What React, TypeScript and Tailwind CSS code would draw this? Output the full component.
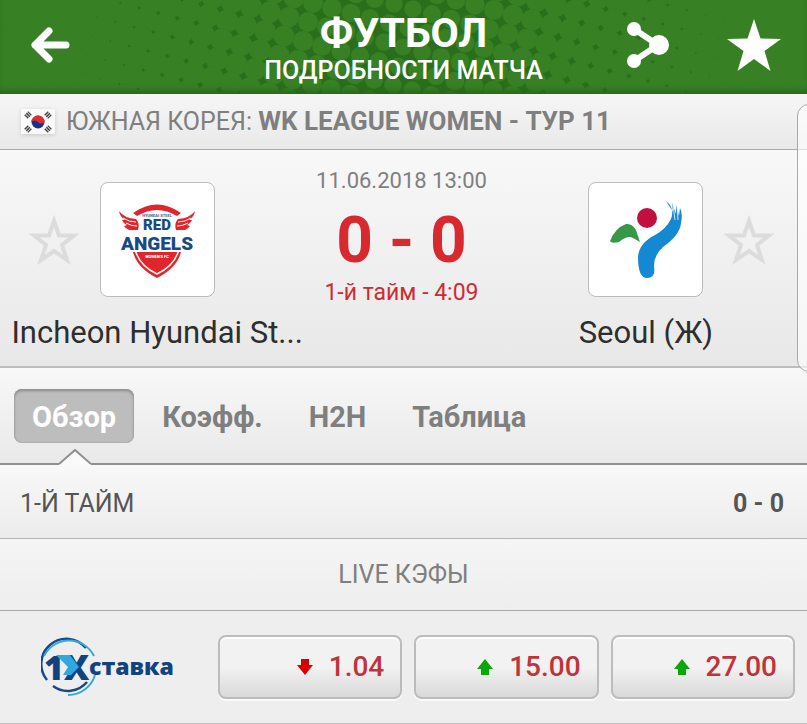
import { clsx } from "clsx";

const tabs = ["Обзор", "Коэфф.", "H2H", "Таблица"];

const odds = [
  { value: "1.04", up: false },
  { value: "15.00", up: true },
  { value: "27.00", up: true },
];

// Halftone lattice: light cells are apart in the middle and melt together at the edges
const cells: { x: number; y: number; r: number }[] = [];
for (let i = -30; i < 30; i++) {
  for (let j = -15; j < 15; j++) {
    const x = 403 + i * 19 - j * 5;
    const y = 47 + i * 5 + j * 19;
    if (y < -16 || y > 110 || x < -20 || x > 830) continue;
    cells.push({ x, y, r: Math.min(15, 8.5 + Math.abs(x - 403) / 62) });
  }
}

function Halftone() {
  return (
    <svg
      className="absolute inset-0 h-full w-full"
      viewBox="0 0 807 94"
      preserveAspectRatio="xMidYMid slice"
      aria-hidden="true"
    >
      <rect x="80" width="650" height="94" fill="#296f1b" />
      {cells.map((cell) => (
        <circle key={`${cell.x}-${cell.y}`} cx={cell.x} cy={cell.y} r={cell.r} fill="#378024" />
      ))}
    </svg>
  );
}

function BackIcon() {
  return (
    <svg width="44" height="38" viewBox="-4 0 44 38" fill="none" stroke="#fff" strokeWidth="7">
      <path d="M19 5 L5 19 L19 33 M5 19 H36" strokeLinecap="round" strokeLinejoin="round" />
    </svg>
  );
}

function ShareIcon() {
  return (
    <svg width="42" height="48" viewBox="0 0 42 48" fill="#fff">
      <path d="M7 8 L31 24 L7 40" fill="none" stroke="#fff" strokeWidth="6" />
      <circle cx="7" cy="8" r="7" />
      <circle cx="7" cy="40" r="7" />
      <circle cx="32" cy="24" r="10" />
    </svg>
  );
}

function StarIcon() {
  return (
    <svg width="54" height="52" viewBox="0 0 54 52" fill="#fff">
      <path d="M27 0 L33.5 19.5 L54 20 L37.5 32 L43.5 52 L27 40 L10.5 52 L16.5 32 L0 20 L20.5 19.5Z" />
    </svg>
  );
}

function StarOutline() {
  return (
    <svg width="52" height="50" viewBox="0 0 52 50" fill="none" stroke="#dcdcdc" strokeWidth="4">
      <path d="M26 6 L31 20.5 L46 20.5 L34 30 L39 45 L26 36 L13 45 L18 30 L6 20.5 L21 20.5Z" />
    </svg>
  );
}

function RedAngelsLogo() {
  return (
    <svg width="76" height="76" viewBox="0 0 76 76" role="img" aria-label="Red Angels">
      <path d="M14 11 Q38 -6 62 11 L58 14 Q38 2 18 14Z" fill="#e0252c" />
      <path d="M14 50 L62 50 Q58 66 38 76 Q18 66 14 50Z" fill="#e0252c" />
      <path d="M16.500 49 Q21 64 38 72 Q55 64 59.500 49" fill="none" stroke="#fff" strokeWidth="1.500" />
      <path d="M0 9 Q5 16 17 17 Q21 21 19 28 L10 28 Q6 26 5 24 L8 23 Q4 21 3 18 L6 18 Q1 15 0 9Z" fill="#e0252c" />
      <path d="M76 9 Q71 16 59 17 Q55 21 57 28 L66 28 Q70 26 71 24 L68 23 Q72 21 73 18 L70 18 Q75 15 76 9Z" fill="#e0252c" />
      <path d="M4 16 Q10 20 17 20 M7 21 Q12 24 18 24 M72 16 Q66 20 59 20 M69 21 Q64 24 58 24" fill="none" stroke="#fff" />
      <g textAnchor="middle" fontFamily="Roboto, sans-serif" fontWeight="900">
        <text x="38" y="15" fontSize="4" fill="#5873a0">HYUNDAI STEEL</text>
        <text x="38" y="28" fontSize="15" fill="#174a86">RED</text>
        <text x="38" y="48" fontSize="19" fill="#174a86">ANGELS</text>
        <text x="38" y="56" fontSize="4" fill="#fff">WOMEN'S FC</text>
      </g>
    </svg>
  );
}

function SeoulLogo() {
  return (
    <svg width="76" height="80" viewBox="0 0 76 80" role="img" aria-label="Seoul">
      <circle cx="39" cy="18" r="10" fill="#c1103f" />
      <path d="M2 41 Q7 28 18 24 Q24 23 28 30 L32 42 L25 38 Q20 35 11 42 Q3 44 2 41Z" fill="#38984a" />
      <path
        d="M58 1 Q67 8 63 19 Q58 29 47 35 Q31 43 30 57 Q30 78 39 78 Q48 78 46 66 Q46 55 55 47 Q72 35 73 23 Q75 13 72 8 L71 16 L68 5 L68 14 L64 3 L65 12Z"
        fill="#1488d2"
      />
      <path d="M65 5 L67 20 M69 7 L70 20" stroke="#fff" strokeWidth="0.800" />
    </svg>
  );
}

function BookmakerLogo() {
  return (
    <svg width="132" height="60" viewBox="0 0 132 60" role="img" aria-label="1xСтавка">
      <g fill="none">
        <path d="M6 43 A25 25 0 0 1 45 11" stroke="#164b86" strokeWidth="2.500" />
        <path d="M3 19 A28 28 0 0 1 53 19" stroke="#35a9dc" strokeWidth="2" />
        <path d="M12 49 A25 25 0 0 0 46 45" stroke="#164b86" strokeWidth="2.500" />
        <path d="M27 58 A28 28 0 0 0 54 38" stroke="#35a9dc" strokeWidth="2" />
      </g>
      <g fontFamily="'Open Sans', sans-serif" fontWeight="800" fill="#124381">
        <text x="3" y="43" fontSize="34">1</text>
        <text x="23" y="43" fontSize="35">X</text>
        <text x="48" y="38" fontSize="23">ставка</text>
      </g>
      <path d="M15 18 H29 L38 30 L30 38 L22 38 L27 30Z" fill="#2fa7df" />
    </svg>
  );
}

function OddsArrow({ up }: { up: boolean }) {
  return (
    <svg
      width="16"
      height="18"
      viewBox="0 0 16 18"
      fill={up ? "#0aa60a" : "#d50000"}
      className={up ? "" : "rotate-180"}
      aria-hidden="true"
    >
      <path d="M8 1 L16 11 H12 V17 H4 V11 H0Z" />
    </svg>
  );
}

function TeamLogo({ children }: { children: React.ReactNode }) {
  return (
    <div className="flex h-[115px] w-[115px] shrink-0 items-center justify-center rounded-lg border border-[#bcbcbc] bg-white">
      {children}
    </div>
  );
}

export default function App() {
  return (
    <div className="relative w-full overflow-hidden bg-[#eeeeee] font-['Roboto',sans-serif] text-[#7f7f7f]">
      {/* Header */}
      <header className="relative h-[94px] bg-[#378024] text-white">
        <Halftone />
        <div className="relative grid h-full grid-cols-[1fr_auto_1fr] items-center px-[26px] pb-1 shadow-[inset_0_-6px_6px_-3px_#2a651c]">
          <button type="button" aria-label="Назад" className="justify-self-start">
            <BackIcon />
          </button>
          <div className="pt-2.5 text-center">
            <h1 className="text-[41px] font-bold leading-[42px]">ФУТБОЛ</h1>
            <p className="text-[25px] font-medium leading-[34px]">ПОДРОБНОСТИ МАТЧА</p>
          </div>
          <div className="flex items-center gap-[58px] justify-self-end">
            <button type="button" aria-label="Поделиться">
              <ShareIcon />
            </button>
            <button type="button" aria-label="В избранное">
              <StarIcon />
            </button>
          </div>
        </div>
      </header>

      {/* League */}
      <div className="flex h-14 items-center gap-2.5 border-b border-[#aaaaaa] bg-linear-to-b from-[#f6f6f6] to-[#e9e9e9] px-5">
        <svg width="36" height="28" viewBox="0 0 36 28" className="shrink-0 drop-shadow-sm" role="img" aria-label="Южная Корея">
          <rect x="1" y="1" width="34" height="25" fill="#fafafa" />
          <circle cx="18" cy="14" r="6.500" fill="#17318f" />
          <path d="M11.500 14 A6.500 6.500 0 0 1 24.500 14 Q21 17 18 14 Q14 11 11.500 14Z" fill="#e02b2f" />
          <g stroke="#444" strokeWidth="5" strokeDasharray="1.500 0.700">
            <path d="M6 9 L10 5" />
            <path d="M26 5 L30 9" />
            <path d="M6 19 L10 23" />
            <path d="M26 23 L30 19" />
          </g>
        </svg>
        <p className="whitespace-nowrap text-[25px] leading-8">
          ЮЖНАЯ КОРЕЯ: <strong className="text-[26px] font-bold">WK LEAGUE WOMEN - ТУР 11</strong>
        </p>
      </div>

      {/* Match */}
      <section className="grid h-[218px] grid-cols-[9fr_5fr_9fr] border-b-2 border-[#bdbdbd] bg-linear-to-b from-[#f8f8f8] to-[#e8e8e8] pr-1">
        <div className="flex flex-col items-center gap-4 pt-8">
          <div className="flex items-center gap-5">
            <button type="button" aria-label="Incheon Hyundai Steel в избранное">
              <StarOutline />
            </button>
            <TeamLogo>
              <RedAngelsLogo />
            </TeamLogo>
            <div className="w-[52px]" />
          </div>
          <h2 className="whitespace-nowrap text-[31px] leading-10 text-[#2e2e2e]">Incheon Hyundai St...</h2>
        </div>
        <div className="flex flex-col items-center whitespace-nowrap pt-[17px]">
          <time className="text-[22px] leading-7">11.06.2018 13:00</time>
          <p className="mt-2 text-[64px] font-bold leading-[76px] text-[#d8292f]">0 - 0</p>
          <p className="text-[23px] leading-7 text-[#cc2d33]">1-й тайм - 4:09</p>
        </div>
        <div className="flex flex-col items-center gap-4 pt-8">
          <div className="flex items-center gap-5">
            <div className="w-[52px]" />
            <TeamLogo>
              <SeoulLogo />
            </TeamLogo>
            <button type="button" aria-label="Seoul в избранное">
              <StarOutline />
            </button>
          </div>
          <h2 className="whitespace-nowrap text-[31px] leading-10 text-[#2e2e2e]">Seoul (Ж)</h2>
        </div>
      </section>

      {/* Tabs */}
      <nav className="relative flex h-[97px] items-start gap-2.5 border-b-2 border-[#8f8f8f] bg-linear-to-b from-[#f8f8f8] to-[#e9e9e9] px-3.5 pt-[21px]">
        {tabs.map((tab, index) => (
          <button
            key={tab}
            type="button"
            className={clsx(
              "h-[54px] rounded-lg px-[18px] pt-1 text-[29px] font-bold",
              index === 0 &&
                "bg-[#bdbdbd] text-white shadow-[inset_0_2px_3px_#8c8c8c,inset_0_0_2px_#999999]",
            )}
          >
            {tab}
          </button>
        ))}
        <svg width="32" height="18" viewBox="0 0 32 18" className="absolute -bottom-1 left-[59px]" aria-hidden="true">
          <path d="M0 15 L16 1 L32 15 V18 H0Z" fill="#fafafa" />
          <path d="M0 15 L16 1 L32 15" fill="none" stroke="#8f8f8f" strokeWidth="2" />
        </svg>
      </nav>

      {/* First half */}
      <div className="flex h-[74px] items-center justify-between border-b border-[#b5b5b5] bg-linear-to-b from-[#f8f8f8] to-[#ececec] pl-5 pr-[23px] pt-1 text-[25px] text-[#555555]">
        <h3>1-Й ТАЙМ</h3>
        <strong className="font-bold">0 - 0</strong>
      </div>

      <div className="flex h-[72px] items-center justify-center border-b border-[#a8a8a8] bg-linear-to-b from-[#f5f5f5] to-[#eeeeee] text-[25px]">
        <h3>LIVE КЭФЫ</h3>
      </div>

      {/* Odds */}
      <div className="flex h-[113px] items-center border-b border-[#bdbdbd]">
        <div className="w-[27%] pl-[41px]">
          <BookmakerLogo />
        </div>
        <div className="grid flex-1 grid-cols-3 gap-3 pr-3">
          {odds.map((odd) => (
            <button
              key={odd.value}
              type="button"
              className="flex h-16 items-center justify-end gap-4 rounded-lg border-2 border-[#bcbcbc] bg-linear-to-b from-[#f2f2f2] from-50% to-[#d9d9d9] pr-4 text-[28px] font-medium text-[#c0333a] shadow-[inset_0_2px_0_#ffffff,0_2px_0_#fafafa]"
            >
              <OddsArrow up={odd.up} />
              {odd.value}
            </button>
          ))}
        </div>
      </div>

      {/* Edge handle */}
      <div className="absolute -right-3 top-[104px] h-[268px] w-[22px] rounded-l-xl border border-[#a9a9a9] bg-white/60" />
    </div>
  );
}
